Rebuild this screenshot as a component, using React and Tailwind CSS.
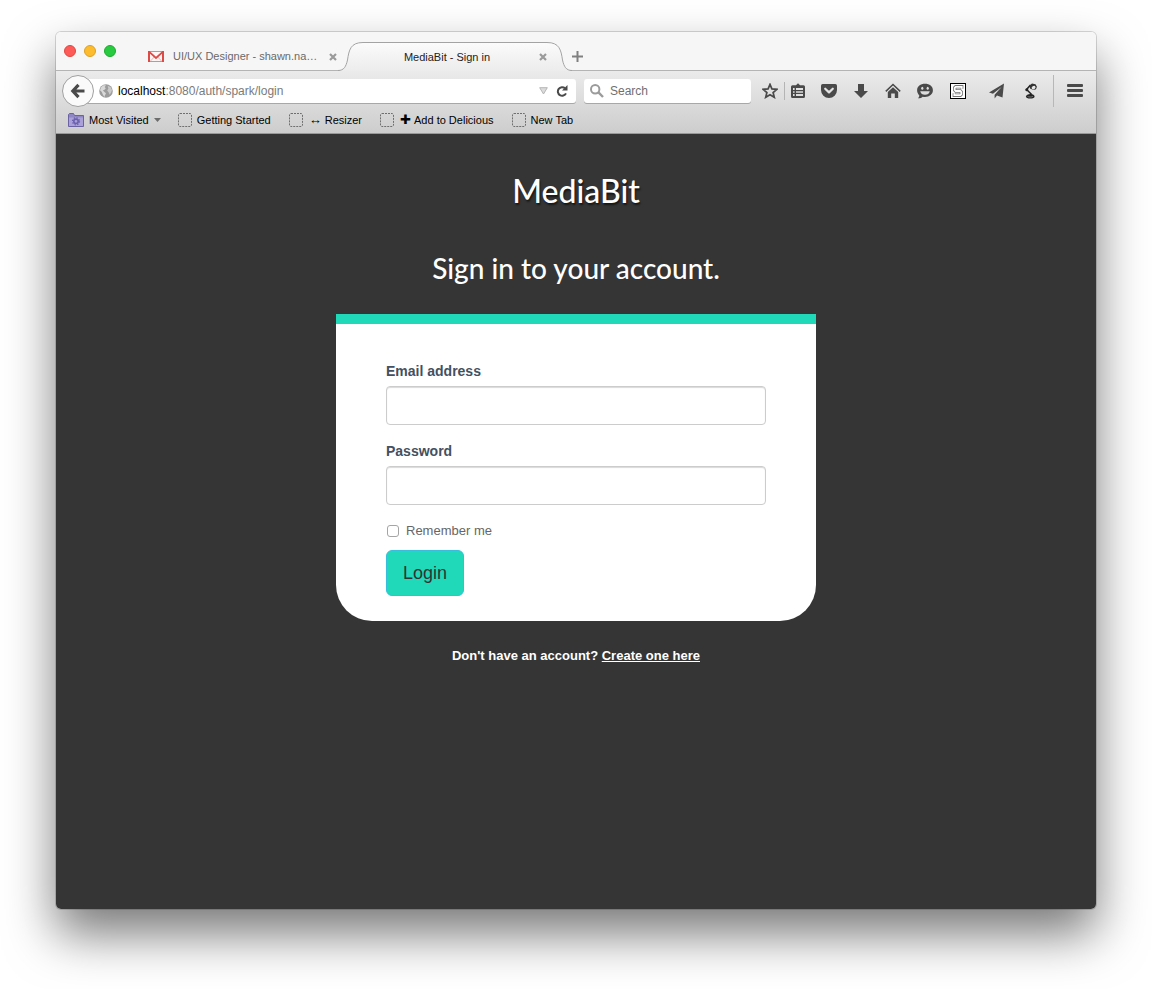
import React from "react";

/* ---------- tab strip ---------- */

function GmailIcon() {
  return (
    <svg width="16" height="11" viewBox="0 0 16 11" aria-hidden="true" className="shrink-0">
      <rect x="0.500" y="0.500" width="15" height="10" fill="#fdf6f5" stroke="#e58784" />
      <path d="M2.5 10 6.2 6M13.5 10 9.8 6" stroke="#e9b7b5" />
      <path d="M1.500 1.200 8 7l6.500-5.800" fill="none" stroke="#dd4b47" strokeWidth="1.800" />
      <path d="M1 0v11M15 0v11" stroke="#dd4b47" strokeWidth="2" />
    </svg>
  );
}

function CloseIcon() {
  return (
    <svg width="8" height="8" viewBox="0 0 8 8" aria-hidden="true">
      <path d="M1 1l6 6M7 1 1 7" stroke="#9a9a9a" strokeWidth="2.200" />
    </svg>
  );
}

function TabEdge({ flip }) {
  return (
    <svg
      width="25"
      height="30"
      viewBox="0 0 25 30"
      aria-hidden="true"
      className={flip ? "shrink-0 -scale-x-100" : "shrink-0"}
    >
      <defs>
        <linearGradient id={flip ? "edgeR" : "edgeL"} x1="0" y1="0" x2="0" y2="1">
          <stop offset="0" stopColor="#fbfbfb" />
          <stop offset="1" stopColor="#ececec" />
        </linearGradient>
      </defs>
      <path
        d="M0 28.500C6 28.500 8 24.500 9.500 18C11 8 12.500 0.500 25 0.500V30H0Z"
        fill={flip ? "url(#edgeR)" : "url(#edgeL)"}
      />
      <path d="M0 28.500C6 28.500 8 24.500 9.500 18C11 8 12.500 0.500 25 0.500" fill="none" stroke="#a3a3a3" />
    </svg>
  );
}

function TabStrip() {
  return (
    <div className="flex h-[39px] items-end bg-[#f6f6f6] shadow-[inset_0_-1px_0_#b4b4b4]">
      <div className="flex w-[92px] shrink-0 gap-2 self-start pt-[13px] pl-2">
        <button aria-label="Close window" className="size-3 rounded-full border border-[#e2463f] bg-[#fc5b57]" />
        <button aria-label="Minimize window" className="size-3 rounded-full border border-[#dfa023] bg-[#fdbc2e]" />
        <button aria-label="Zoom window" className="size-3 rounded-full border border-[#1bac2c] bg-[#28ca40]" />
      </div>
      <div role="tablist" className="flex min-w-0 items-end">
        <div className="flex h-[29px] w-[190px] items-center justify-between pr-px">
          <button role="tab" className="flex items-center gap-[9px] whitespace-nowrap text-[#6a6a6a]">
            <GmailIcon />
            UI/UX Designer - shawn.na…
          </button>
          <button aria-label="Close tab" className="shrink-0">
            <CloseIcon />
          </button>
        </div>
        <div className="flex h-[29px] overflow-hidden">
          <TabEdge />
          <div className="flex w-[184px] items-center border-t border-[#a3a3a3] bg-linear-to-b from-[#fbfbfb] to-[#ececec]">
            <button role="tab" aria-selected="true" className="flex-1 pr-2 text-center text-[#222]">
              MediaBit - Sign in
            </button>
            <button aria-label="Close tab" className="shrink-0">
              <CloseIcon />
            </button>
          </div>
          <TabEdge flip />
        </div>
        <button aria-label="New tab" className="flex h-[29px] items-center">
          <svg width="11" height="11" viewBox="0 0 11 11" aria-hidden="true">
            <path d="M5.500 0v11M0 5.500h11" stroke="#808080" strokeWidth="2" />
          </svg>
        </button>
      </div>
    </div>
  );
}

/* ---------- navigation bar ---------- */

function Tool({ label, className, children }) {
  return (
    <button aria-label={label} className={`flex h-8 shrink-0 items-center justify-center ${className}`}>
      <svg width="16" height="16" viewBox="0 0 16 16" aria-hidden="true" fill="#4a4a4a">
        {children}
      </svg>
    </button>
  );
}

function GlobeIcon() {
  return (
    <svg width="14" height="14" viewBox="0 0 14 14" aria-hidden="true" className="shrink-0">
      <circle cx="7" cy="7" r="6.800" fill="#9c9c9c" />
      <path
        d="M2 3.600C3.600 1.300 5.500 1 7 1.600L5.600 3 6.800 4.200 5.200 6 3.800 6.200 5.200 7.800 7 9.200 6 11.200 5.400 12.900 3.800 10.600 2.800 8 1 6.200Z"
        fill="#d9d9d9"
      />
      <path d="M8.600 1.800 11.600 3 13 6 12.200 8.600 10.600 10.800 9.600 8.200 8.200 6.600 9.400 4.400Z" fill="#c9c9c9" />
    </svg>
  );
}

function NavBar() {
  return (
    <div className="flex h-10 items-center pl-1.5">
      <button
        aria-label="Back"
        className="z-10 flex size-8 shrink-0 items-center justify-center rounded-full border border-[#a0a0a0] bg-[#fafafa]"
      >
        <svg width="16" height="16" viewBox="0 0 16 16" aria-hidden="true">
          <path d="M8.500 1.800 2.800 8l5.700 6.200M3 8h11.500" fill="none" stroke="#4a4a4a" strokeWidth="3.200" />
        </svg>
      </button>
      <div className="-ml-2 flex h-6 min-w-0 flex-1 items-center rounded-r-[3px] bg-white pl-[13px] shadow-[0_1px_0_#a8a8a8]">
        <GlobeIcon />
        <label className="relative ml-[5px] min-w-0 flex-1 truncate text-xs text-[#7b7b7b]">
          <span className="text-black">localhost</span>:8080/auth/spark/login
          <input type="text" aria-label="Address" className="absolute inset-0 w-full bg-transparent outline-none" />
        </label>
        <button aria-label="Show history" className="shrink-0">
          <svg width="9" height="8" viewBox="0 0 9 8" aria-hidden="true">
            <path d="M0.700 0.700h7.600L4.500 7Z" fill="#dcdcdc" stroke="#b5b5b5" />
          </svg>
        </button>
        <button aria-label="Reload" className="mr-2 ml-2 shrink-0">
          <svg width="12" height="12" viewBox="0 0 12 12" aria-hidden="true">
            <path d="M9 3.200A4.300 4.300 0 1 0 10 8.400" fill="none" stroke="#4a4a4a" strokeWidth="2" />
            <path d="M11.500 0v5.500H6Z" fill="#4a4a4a" />
          </svg>
        </button>
      </div>
      <label className="ml-2 flex h-6 w-[167px] shrink-0 items-center gap-[6px] rounded-[3px] bg-white pl-[6px] shadow-[0_1px_0_#a8a8a8]">
        <svg width="14" height="14" viewBox="0 0 14 14" aria-hidden="true" className="shrink-0">
          <circle cx="5.200" cy="5.200" r="4.200" fill="none" stroke="#9b9b9b" strokeWidth="2" />
          <path d="M8.200 8.200 13 13" stroke="#9b9b9b" strokeWidth="2.400" />
        </svg>
        <input
          type="search"
          aria-label="Search"
          placeholder="Search"
          className="w-full min-w-0 bg-transparent text-xs outline-none placeholder:text-[#707070]"
        />
      </label>
      <div className="ml-[5px] flex shrink-0 items-center">
        <Tool label="Bookmark this page" className="w-7">
          <path
            d="M8 1.400 9.900 5.900 14.900 6.300 11.100 9.500 12.300 14.300 8 11.700 3.700 14.300 4.900 9.500 1.100 6.300 6.100 5.900Z"
            fill="none"
            stroke="#4a4a4a"
            strokeWidth="1.700"
          />
        </Tool>
        <span className="h-[18px] w-px bg-[#b4b4b4]" />
        <Tool label="Show bookmarks" className="w-7">
          <path
            fillRule="evenodd"
            d="M5 2.200 7 .300l2 1.900h3.500A1.500 1.500 0 0 1 14 3.700v9.800A1.500 1.500 0 0 1 12.500 15h-11A1.500 1.500 0 0 1 0 13.500V3.700A1.500 1.500 0 0 1 1.500 2.200ZM2 5v2h1.600V5ZM5 5v2h7V5ZM2 8.200v1.600h1.600V8.200ZM5 8.200v1.600h7V8.200ZM2 11v2h1.600v-2ZM5 11v2h7v-2Z"
          />
        </Tool>
        <Tool label="Pocket" className="w-8">
          <path d="M1.700 1h12.600A1.700 1.700 0 0 1 16 2.700V7A8 8 0 0 1 0 7V2.700A1.700 1.700 0 0 1 1.700 1Z" />
          <path d="m4.200 5.700 3.800 3.700 3.800-3.700" fill="none" stroke="#e4e4e4" strokeWidth="2.200" strokeLinecap="round" strokeLinejoin="round" />
        </Tool>
        <Tool label="Downloads" className="w-8">
          <path d="M5 1h6v7h4l-7 7-7-7h4Z" />
        </Tool>
        <Tool label="Home" className="w-8">
          <path d="M.800 8.400 8 1.500l7.200 6.900" fill="none" stroke="#4a4a4a" strokeWidth="1.500" />
          <path d="M8 4.200 13.200 9v6H9.800v-4.500H6.200V15H2.800V9Z" />
        </Tool>
        <Tool label="Start a conversation" className="w-8">
          <path d="M8 .800c4.500 0 7.900 2.600 7.900 6.500S12.500 14 8 14c-.800 0-1.600-.100-2.300-.300C4.400 14.800 2.600 15.400.800 15.200c1-.800 1.500-1.800 1.500-2.800C.900 11 .100 9.300.100 7.300.100 3.400 3.500.800 8 .800Z" />
          <ellipse cx="5.300" cy="5.300" rx="1.100" ry="1.500" fill="#dedede" />
          <ellipse cx="10.700" cy="5.300" rx="1.100" ry="1.500" fill="#dedede" />
          <path d="M3.200 8.200h9.600c-.500 2.300-2.300 3.600-4.800 3.600s-4.300-1.300-4.800-3.600Z" fill="#dedede" />
        </Tool>
        <Tool label="S add-on" className="w-[34px]">
          <rect x="0.500" y="0.500" width="15" height="15" fill="#fff" stroke="#000" />
          <path d="M11.700 5.800V3.800H5.700L4.700 4.800V7L5.700 8h4.600l1 1v2.200l-1 1H4.300v-2" fill="none" stroke="#777" strokeWidth="3.400" />
          <path d="M11.700 5.800V3.800H5.700L4.700 4.800V7L5.700 8h4.600l1 1v2.200l-1 1H4.300v-2" fill="none" stroke="#fff" strokeWidth="1.800" />
        </Tool>
        <Tool label="Share this page" className="ml-[6px] w-8">
          <path d="M15 .500 0 9.500l4 1.300L12.600 4 5.600 11.700V15.500L8 12.400l5.500 2Z" />
        </Tool>
        <Tool label="Desk lamp" className="w-9">
          <path d="M7.500 2 3.600 6.500l5 5" fill="none" stroke="#222" strokeWidth="1.500" />
          <path d="M6.500 2.600 9 .400l3.500.800 1.400 2.600-.900 2.400-2.600.900L7 5.400Z" fill="#333" />
          <ellipse cx="10.600" cy="4.600" rx="2.100" ry="1.600" fill="#e6e6e6" transform="rotate(-35 10.600 4.600)" />
          <circle cx="3.800" cy="6.700" r="1.500" fill="#222" />
          <path d="M3 13.500c0-1.600 2-2.600 4.500-2.600s4 1 4 2.600-1.500 2-4.200 2S3 15 3 13.500Z" fill="#222" />
          <path d="M4.500 13.400c1.500.800 4 .800 5.400 0" fill="none" stroke="#8a8a8a" strokeWidth="0.800" />
        </Tool>
        <span className="ml-1 h-8 w-px bg-[#b3b8be]" />
        <Tool label="Open menu" className="w-[42px]">
          <rect y="1" width="16" height="3" rx="1" />
          <rect y="6" width="16" height="3" rx="1" />
          <rect y="11" width="16" height="3" rx="1" />
        </Tool>
      </div>
    </div>
  );
}

/* ---------- bookmarks bar ---------- */

function FolderIcon() {
  return (
    <svg width="16" height="14" viewBox="0 0 16 14" aria-hidden="true">
      <path d="M.500 13.500v-12L1.500.500h4l1 2h9v11Z" fill="#8f86c4" stroke="#6b62a4" />
      <path d="M1 4.500h14V13H1Z" fill="#a9a1d8" />
      <circle cx="8" cy="8.300" r="2.200" fill="none" stroke="#6a60ad" strokeWidth="1.600" />
      <circle cx="8" cy="8.300" r="3.500" fill="none" stroke="#6a60ad" strokeWidth="1.200" strokeDasharray="1.375 1.375" />
    </svg>
  );
}

function BlankIcon() {
  return (
    <svg width="14" height="14" viewBox="0 0 14 14" aria-hidden="true">
      <rect x="0.500" y="0.500" width="13" height="13" rx="1.500" fill="none" stroke="#6f6f6f" strokeDasharray="2 1" />
    </svg>
  );
}

const bookmarks = [
  { text: "Getting Started" },
  { mark: "↔", text: "Resizer" },
  { mark: "✚", text: "Add to Delicious" },
  { text: "New Tab" },
];

function BookmarksBar() {
  return (
    <nav aria-label="Bookmarks" className="flex h-[22px] items-start pl-3 text-black">
      <button className="flex h-[18px] items-center gap-[5px]">
        <FolderIcon />
        Most Visited
        <svg width="7" height="4" viewBox="0 0 7 4" aria-hidden="true">
          <path d="M0 0h7L3.500 4Z" fill="#6c6c6c" />
        </svg>
      </button>
      <div className="ml-[17px] flex gap-[18px]">
        {bookmarks.map(({ mark, text }) => (
          <a key={text} href="#" className="flex h-[18px] items-center whitespace-nowrap">
            <BlankIcon />
            {mark && <span className="ml-1.5 -mr-0.5 text-[13px] leading-[18px]">{mark}</span>}
            <span className="ml-[5px]">{text}</span>
          </a>
        ))}
      </div>
    </nav>
  );
}

/* ---------- sign-in page ---------- */

function Field({ id, type, label }) {
  return (
    <div className="mb-4">
      <label htmlFor={id} className="mb-[5px] block text-sm leading-5 font-bold text-[#44505f]">
        {label}
      </label>
      <input
        id={id}
        type={type}
        className="block h-[39px] w-full rounded-[4px] border border-[#ccc] bg-white px-3 text-sm shadow-[inset_0_1px_1px_rgba(0,0,0,0.15)] outline-none"
      />
    </div>
  );
}

function SignIn() {
  return (
    <main className="flex flex-1 flex-col items-center bg-[#353535] px-4 pt-9 pb-10 text-white">
      <h1 className="font-[Lato,sans-serif] text-[32px] leading-[42px] font-medium [text-shadow:1px_2px_2px_rgba(0,0,0,0.6)]">
        MediaBit
      </h1>
      <h2 className="mt-9 font-[Lato,sans-serif] text-[28px] leading-10 font-medium">Sign in to your account.</h2>
      <form
        onSubmit={(e) => e.preventDefault()}
        className="mt-[26px] w-full max-w-[480px] rounded-b-[36px] border-t-[10px] border-[#1fd9b9] bg-white px-[50px] pt-[37px] pb-[25px]"
      >
        <Field id="email" type="email" label="Email address" />
        <Field id="password" type="password" label="Password" />
        <label className="flex h-5 items-center gap-[7px] pl-px text-[13px] text-[#666]">
          <input
            type="checkbox"
            className="size-3 appearance-none rounded-[3px] border border-[#a5a5a5] bg-white checked:bg-[#1fd9b9]"
          />
          Remember me
        </label>
        <button
          type="submit"
          className="mt-[9px] block h-[46px] rounded-[6px] border border-[#35bfdc] bg-[#1fd9b9] px-4 text-lg text-[#333]"
        >
          Login
        </button>
      </form>
      <p className="mt-[25px] text-[13px] leading-5 font-bold">
        Don't have an account?{" "}
        <a href="#" className="underline">
          Create one here
        </a>
      </p>
    </main>
  );
}

export default function App() {
  return (
    <div className="flex min-h-screen flex-col bg-white px-14 pt-8 pb-20 font-['Liberation_Sans',Arial,sans-serif]">
      <div className="flex flex-1 flex-col overflow-hidden rounded-[5px] shadow-[0_0_0_1px_rgba(0,0,0,0.15),0_25px_50px_rgba(0,0,0,0.53)]">
        <header className="border-b border-[#999] text-[11px]">
          <TabStrip />
          <div className="bg-linear-to-b from-[#ebebeb] to-[#cdcdcd]">
            <NavBar />
            <BookmarksBar />
          </div>
        </header>
        <SignIn />
      </div>
    </div>
  );
}
